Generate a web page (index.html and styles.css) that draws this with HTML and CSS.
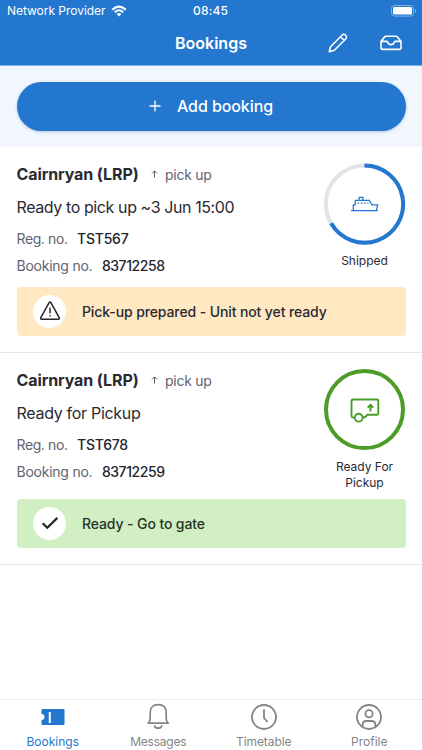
FILE: index.html
```html
<!DOCTYPE html>
<html lang="en">
<head>
<meta charset="utf-8">
<title>Bookings</title>
<link rel="stylesheet" href="styles.css">
</head>
<body>
<div class="app">
  <header class="top">
    <div class="status">
      <div class="carrier"><span class="carrier-name">Network Provider</span>
        <svg width="16" height="12" viewBox="0 0 16 12" fill="none" stroke="#fff" stroke-width="2.1"><path d="M1.2 4.7Q8-1.6 14.8 4.7M3.7 7.2Q8 3.3 12.3 7.2"/><path d="M8 11.4 5.6 9Q8 7 10.4 9Z" fill="#fff" stroke="none"/></svg>
      </div>
      <span class="time">08:45</span>
      <svg class="battery" width="26" height="12" viewBox="0 0 26 12"><rect x=".5" y=".5" width="22" height="10.6" rx="3" fill="none" stroke="#85b1e3"/><rect x="2" y="2" width="19" height="7.6" rx="1.6" fill="#fff"/><path d="M24 4v4q1.3-.6 1.3-2T24 4Z" fill="#85b1e3"/></svg>
    </div>
    <div class="nav">
      <h1 class="title">Bookings</h1>
      <div class="actions">
        <svg width="20" height="20" viewBox="0 0 20 20" fill="none" stroke="#fff" stroke-width="1.6" stroke-linejoin="round"><path d="M1.300 18.700 2.600 13.800 13.900 2.200a2.600 2.600 0 0 1 3.800 3.800L6.400 17.300ZM12.500 3.700l3.800 3.800"/></svg>
        <svg width="22" height="16" viewBox="0 0 22 16" fill="none" stroke="#fff" stroke-width="1.6" stroke-linejoin="round"><path d="M1 6.400 4.500 1.900Q5.200 1.200 6.300 1.200h9.400q1.100 0 1.800.7L21 6.400v6.200q0 1.800-1.800 1.800H2.800Q1 14.400 1 12.600V6.400h5.700q1 0 1.200 1 .7 2.200 3.100 2.200t3.100-2.200q.2-1 1.200-1H21"/></svg>
      </div>
    </div>
  </header>
  <section class="add">
    <button class="add-button"><svg width="12" height="12" viewBox="0 0 12 12" stroke="#fff" stroke-width="1.3"><path d="M6 .5v11M.5 6h11"/></svg><span>Add booking</span></button>
  </section>
  <main>
    <article class="card">
      <div class="summary">
        <div class="details">
          <div class="place"><h2>Cairnryan (LRP)</h2><svg width="7" height="8" viewBox="0 0 7 8" fill="none" stroke="#555968"><path d="M3.500 7.500V1M1 3.400 3.500.900 6 3.400"/></svg><span class="kind">pick up</span></div>
          <p class="state state-time">Ready to pick up ~3 Jun 15:00</p>
          <p class="row reg"><span>Reg. no.</span><b>TST567</b></p>
          <p class="row num"><span>Booking no.</span><b>83712258</b></p>
        </div>
        <div class="progress">
          <svg width="82" height="82" viewBox="0 0 82 82" fill="none">
            <circle cx="40.500" cy="41" r="38.600" stroke="#e1e3e8" stroke-width="4"/>
            <path d="M40.500 2.400A38.600 38.600 0 1 1 7.100 60.300" stroke="#2377cf" stroke-width="4"/>
            <g stroke="#2377cf" stroke-width="1.250" stroke-linejoin="round"><path d="M27 47.500h27M29.300 47v-5.200h2v-4.500h14l2.500 4.500h6L52.300 47M35.100 37v-2.700h3.800V37"/><path d="M33.500 40h11" stroke-dasharray="1.800 1.500"/></g>
          </svg>
          <p class="label">Shipped</p>
        </div>
      </div>
      <div class="banner warn">
        <span class="badge"><svg width="22" height="20" viewBox="0 0 22 20" fill="none" stroke="#24252d" stroke-width="1.500" stroke-linejoin="round" stroke-linecap="round"><path d="M10.100 1.700q.9-1.300 1.800 0l8.300 15q.6 1.500-1 1.600H2.800q-1.600-.1-1-1.600ZM11 7.300v4.500M11 14.700v.2"/></svg></span>
        <span class="message">Pick-up prepared - Unit not yet ready</span>
      </div>
    </article>
    <article class="card card-ready">
      <div class="summary">
        <div class="details">
          <div class="place"><h2>Cairnryan (LRP)</h2><svg width="7" height="8" viewBox="0 0 7 8" fill="none" stroke="#555968"><path d="M3.500 7.500V1M1 3.400 3.500.900 6 3.400"/></svg><span class="kind">pick up</span></div>
          <p class="state">Ready for Pickup</p>
          <p class="row reg"><span>Reg. no.</span><b>TST678</b></p>
          <p class="row num"><span>Booking no.</span><b>83712259</b></p>
        </div>
        <div class="progress">
          <svg width="82" height="82" viewBox="0 0 82 82" fill="none" stroke="#4c9c27">
            <circle cx="40.500" cy="40.600" r="38.500" stroke-width="4"/>
            <g stroke-width="1.900" stroke-linejoin="round"><path d="M30.500 48.500h-1.500q-1.500 0-1.500-1.500V32q0-1.500 1.500-1.500h23.700q1.600 0 1.600 1.500v12.200q0 1.500-1.600 1.500h-9.300l-2.200 2.500h-2.500"/><circle cx="34.700" cy="48.700" r="3.900"/><path d="M46.500 42.500V36M43.700 38.700l2.800-3 2.800 3"/></g>
          </svg>
          <p class="label">Ready For<br>Pickup</p>
        </div>
      </div>
      <div class="banner ok">
        <span class="badge"><svg width="18" height="14" viewBox="0 0 18 14" fill="none" stroke="#24252d" stroke-width="2.200"><path d="m1.700 7.200 4.600 4.600L16.300 1.900"/></svg></span>
        <span class="message">Ready - Go to gate</span>
      </div>
    </article>
  </main>
  <nav class="tabs">
    <a class="tab active"><svg width="28" height="28" viewBox="0 0 28 28"><path d="M3.500 6h21q1 0 1 1v14q0 1-1 1h-21q-1 0-1-1v-4a3 3 0 0 0 0-6V7q0-1 1-1Z" fill="#2377cf"/><path d="M10.800 9v11" stroke="#fff" stroke-width="2"/></svg><span>Bookings</span></a>
    <a class="tab messages"><svg width="28" height="28" viewBox="0 0 28 28" fill="none" stroke="#858585" stroke-width="1.700" stroke-linejoin="round"><path d="M4.200 20.200q2-2.100 2-5V10Q6.200 1.700 14.200 1.700T22.200 10v5.200q0 2.900 2 5ZM10.400 22.500a3.900 3.500 0 0 0 7.600 0"/></svg><span>Messages</span></a>
    <a class="tab timetable"><svg width="28" height="28" viewBox="0 0 28 28" fill="none" stroke="#858585" stroke-width="1.800" stroke-linecap="round"><circle cx="14" cy="14" r="12"/><path d="M14 7v8l3.200 3.500"/></svg><span>Timetable</span></a>
    <a class="tab profile"><svg width="28" height="28" viewBox="0 0 28 28" fill="none" stroke="#858585" stroke-width="1.800"><circle cx="14" cy="14" r="12"/><circle cx="14" cy="10.800" r="3.600"/><path d="M7.600 23.800v-2q0-3.800 3.600-3.800h5.600q3.600 0 3.600 3.800v2"/></svg><span>Profile</span></a>
  </nav>
</div>
</body>
</html>
```
FILE: styles.css
```css
* { box-sizing: border-box; margin: 0; padding: 0; }
body { font-family: Inter, "Liberation Sans", sans-serif; color: #292a32; background: #fff; }
svg { display: block; flex: none; }
.app { width: 422px; height: 750px; display: flex; flex-direction: column; overflow: hidden; white-space: nowrap; }
.top { height: 66px; background: #2377cf; color: #fff; border-bottom: 1px solid #80b0e5; }
.status { height: 21px; display: grid; grid-template-columns: 1fr 36px 1fr; align-items: center; padding: 0 5px 0 7px; font-size: 12px; }
.carrier { display: flex; align-items: center; gap: 5px; }
.carrier-name { width: 99px; letter-spacing: -.03px; }
.time { font-weight: 500; letter-spacing: .2px; margin-left: -1px; }
.battery { justify-self: end; }
.nav { height: 43px; display: grid; grid-template-columns: 1fr auto 1fr; align-items: center; padding: 0 20px; }
.title { grid-column: 2; font-size: 16px; line-height: 20px; font-weight: 600; }
.actions { display: flex; align-items: center; justify-content: flex-end; gap: 32px; }
.add { height: 81px; padding: 16px 16px 0 16.5px; background: #f2f7fe; }
.add-button { width: 389px; height: 49px; display: flex; align-items: center; justify-content: center; gap: 16px; padding-bottom: 1px; border: 0; border-radius: 25px; background: #2377cf; color: #fff; font: 500 16px/20px Inter, sans-serif; letter-spacing: -.08px; box-shadow: 0 1px 3px #6a95c580; }
.card { height: 206px; padding: 16px 16.5px 0; border-bottom: 1.5px solid #e6e6e7; }
.card-ready { height: 212px; }
.summary { height: 124px; display: flex; justify-content: space-between; }
.card-ready .summary { height: 130px; }
.place { display: flex; align-items: center; height: 22px; }
h2 { width: 134.5px; font-size: 16px; line-height: 22px; font-weight: 700; letter-spacing: -.1px; }
.kind { margin-left: 7px; font-size: 14px; letter-spacing: -.25px; color: #62636f; }
.state { margin-top: 11px; font-size: 16px; line-height: 22px; letter-spacing: -.3px; }
.state-time { letter-spacing: -.4px; }
.row { display: flex; gap: 9.5px; font-size: 14px; line-height: 20px; margin-top: 11px; color: #62636f; letter-spacing: -.24px; }
.reg span { letter-spacing: -.4px; }
.num { margin-top: 7px; }
.row b { font-weight: 500; color: #24252d; }
.num b { letter-spacing: -.43px; }
.progress { width: 82px; text-align: center; }
.label { margin-top: 8px; font-size: 12px; line-height: 16px; }
.banner { width: 389px; height: 48.5px; padding-left: 16.5px; display: flex; align-items: center; gap: 16px; border-radius: 4px; font-size: 14px; font-weight: 500; letter-spacing: -.11px; }
.warn { background: #ffe8c2; }
.ok { background: #d1efc2; color: #26332a; }
.badge { width: 33px; height: 33px; border-radius: 50%; background: #fff; display: grid; place-items: center; }
.tabs { margin-top: auto; height: 51px; border-top: 1px solid #eee; display: grid; grid-template-columns: repeat(4, 1fr); color: #858585; font-size: 12px; }
.tab { display: flex; flex-direction: column; align-items: center; padding-top: 3px; }
.tab span { margin-top: 3px; line-height: 16px; }
.messages span { letter-spacing: -.25px; }
.timetable span { letter-spacing: -.08px; }
.active { color: #2377cf; }
```
